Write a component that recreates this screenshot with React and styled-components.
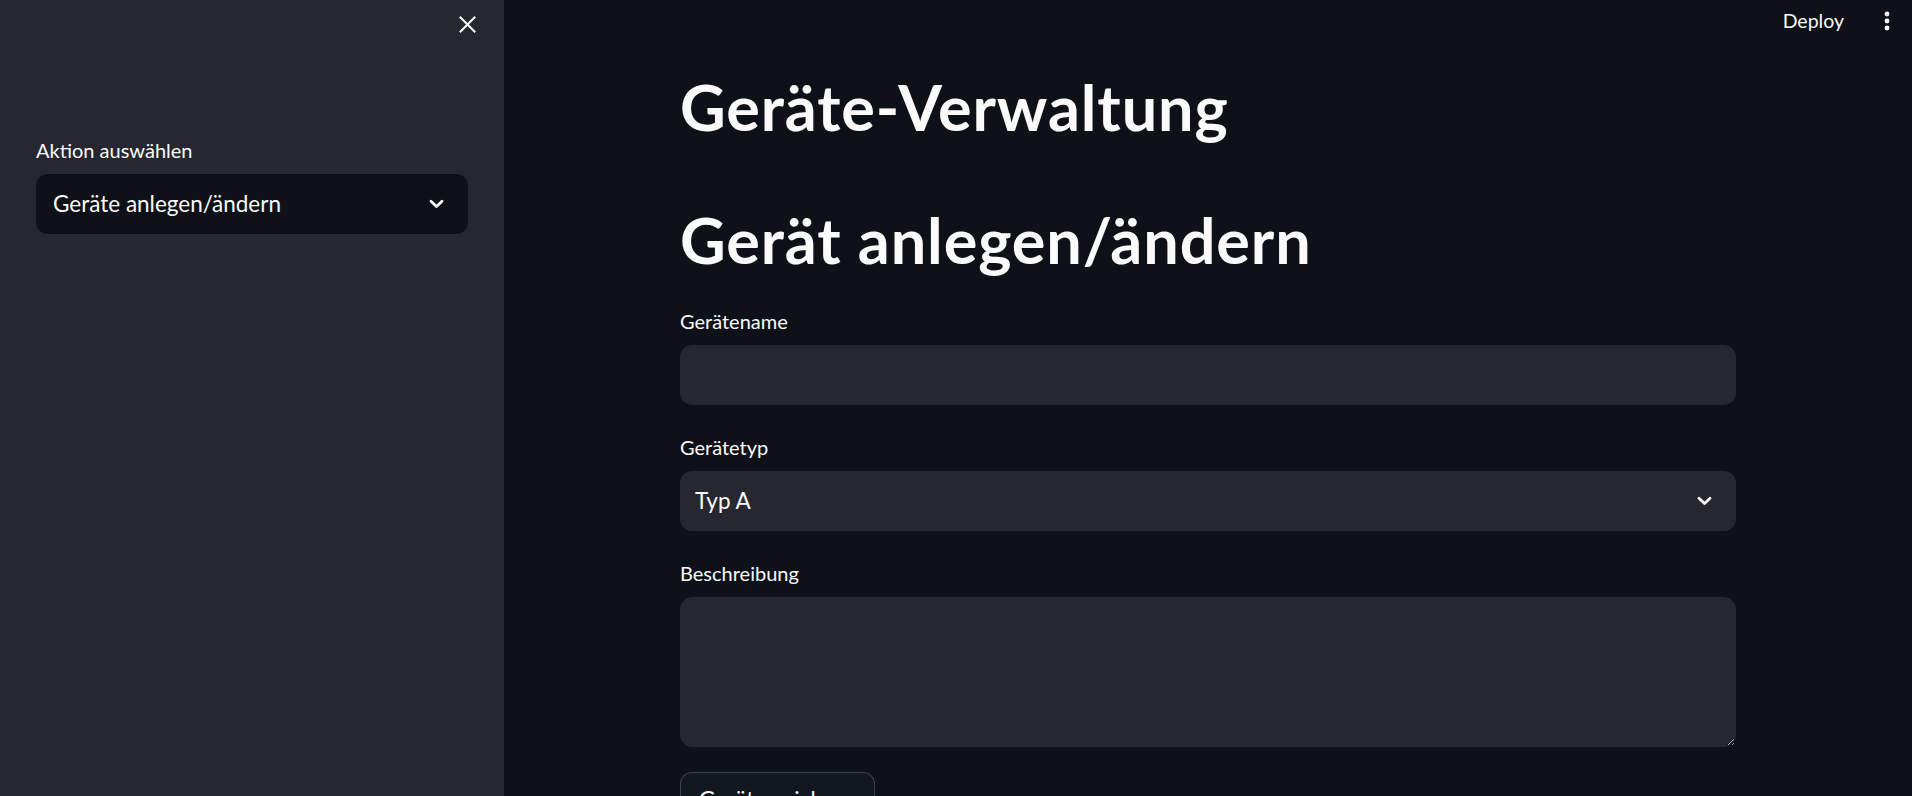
import React from "react";
import styled, { createGlobalStyle } from "styled-components";

const GlobalStyle = createGlobalStyle`
  html, body {
    margin: 0;
    padding: 0;
    background: #0e1117;
    color: #fafafa;
    font-family: "Lato", "Noto Sans", sans-serif;
    overflow: hidden;
  }
  * { box-sizing: border-box; }
`;

const Shell = styled.div`
  display: flex;
  width: 100%;
  height: 100vh;
  overflow: hidden;
`;

const Sidebar = styled.aside`
  flex: 0 0 504px;
  width: 504px;
  background: #262730;
  display: flex;
  flex-direction: column;
`;

const SidebarHeader = styled.div`
  flex-shrink: 0;
  height: 48px;
  display: flex;
  align-items: center;
  justify-content: flex-end;
  padding: 0 28px 0 36px;
`;

const IconButton = styled.button`
  background: none;
  border: none;
  padding: 0;
  margin: 0;
  display: flex;
  align-items: center;
  justify-content: center;
  color: #fafafa;
  cursor: pointer;
`;

const SidebarBody = styled.div`
  flex-shrink: 0;
  padding: 88px 36px 0 36px;
`;

const Main = styled.main`
  flex: 1;
  display: flex;
  flex-direction: column;
  min-width: 0;
  overflow: hidden;
`;

const TopBar = styled.header`
  flex-shrink: 0;
  height: 42px;
  display: flex;
  align-items: center;
  justify-content: flex-end;
  padding-right: 22px;
  gap: 40px;
`;

const DeployLink = styled.span`
  font-size: 19.5px;
  line-height: 28px;
  color: #fafafa;
`;

const Content = styled.div`
  flex-shrink: 0;
  width: 100%;
  max-width: 1104px;
  margin: 0 auto;
  padding: 29px 24px 0 24px;
  display: flex;
  flex-direction: column;
`;

const Title = styled.h1`
  margin: 0 0 ${(p) => p.$gap || 0}px 0;
  font-size: 63px;
  line-height: 72px;
  font-weight: 700;
  letter-spacing: 0.9px;
  color: #fafafa;
`;

const Field = styled.div`
  display: flex;
  flex-direction: column;
  flex-shrink: 0;
  margin-bottom: ${(p) => (p.$gap == null ? 28 : p.$gap)}px;
`;

const Label = styled.label`
  font-size: 20px;
  line-height: 28px;
  margin-bottom: 10px;
  color: #fafafa;
`;

const TextInput = styled.input`
  height: 60px;
  width: 100%;
  background: #262730;
  border: 1px solid #262730;
  border-radius: 12px;
  outline: none;
  color: #fafafa;
  font-family: inherit;
  font-size: 22.5px;
  padding: 0 16px;
`;

const SelectBox = styled.div`
  height: 60px;
  width: 100%;
  background: ${(p) => p.$bg};
  border-radius: 12px;
  display: flex;
  align-items: center;
  justify-content: space-between;
  padding: 0 24px 0 ${(p) => p.$padLeft}px;
  cursor: pointer;
`;

const SelectValue = styled.span`
  font-size: 22.5px;
  line-height: 60px;
  color: #fafafa;
  white-space: nowrap;
`;

const TextArea = styled.textarea`
  height: 150px;
  width: 100%;
  background: #262730;
  border: 1px solid #262730;
  border-radius: 12px;
  outline: none;
  color: #fafafa;
  font-family: inherit;
  font-size: 22.5px;
  padding: 16px;
  resize: vertical;
  color-scheme: dark;
  display: block;
`;

const Button = styled.button`
  align-self: flex-start;
  flex-shrink: 0;
  min-height: 60px;
  padding: 9px 18px 6px 18px;
  background: #131720;
  border: 1px solid rgba(250, 250, 250, 0.2);
  border-radius: 12px;
  color: #fafafa;
  font-family: inherit;
  font-size: 22.5px;
  line-height: 35px;
  display: flex;
  align-items: flex-start;
  cursor: pointer;
`;

const Chevron = () => (
  <svg width="15" height="10" viewBox="0 0 15 10" fill="none">
    <path d="M2 2.2 L7.5 7.5 L13 2.2" stroke="#fafafa" strokeWidth="2.8" strokeLinecap="round" strokeLinejoin="round" />
  </svg>
);

const CloseIcon = () => (
  <svg width="17" height="17" viewBox="0 0 17 17" fill="none">
    <path d="M1.5 1.5 L15.5 15.5 M15.5 1.5 L1.5 15.5" stroke="#fafafa" strokeWidth="2" strokeLinecap="square" />
  </svg>
);

const MoreIcon = () => (
  <svg width="6" height="20" viewBox="0 0 6 20" fill="#fafafa">
    <circle cx="3" cy="3" r="2.4" />
    <circle cx="3" cy="10" r="2.4" />
    <circle cx="3" cy="17" r="2.4" />
  </svg>
);

export default function App() {
  return (
    <>
      <GlobalStyle />
      <Shell>
        <Sidebar>
          <SidebarHeader>
            <IconButton aria-label="Close sidebar">
              <CloseIcon />
            </IconButton>
          </SidebarHeader>
          <SidebarBody>
            <Field $gap={0}>
              <Label>Aktion auswählen</Label>
              <SelectBox $bg="#0e1117" $padLeft={17}>
                <SelectValue>Geräte anlegen/ändern</SelectValue>
                <Chevron />
              </SelectBox>
            </Field>
          </SidebarBody>
        </Sidebar>
        <Main>
          <TopBar>
            <DeployLink>Deploy</DeployLink>
            <IconButton aria-label="Menu">
              <MoreIcon />
            </IconButton>
          </TopBar>
          <Content>
            <Title $gap={61}>Geräte-Verwaltung</Title>
            <Title $gap={31}>Gerät anlegen/ändern</Title>
            <Field>
              <Label>Gerätename</Label>
              <TextInput type="text" />
            </Field>
            <Field>
              <Label>Gerätetyp</Label>
              <SelectBox $bg="#262730" $padLeft={15}>
                <SelectValue>Typ A</SelectValue>
                <Chevron />
              </SelectBox>
            </Field>
            <Field $gap={25}>
              <Label>Beschreibung</Label>
              <TextArea />
            </Field>
            <Button>Gerät speichern</Button>
          </Content>
        </Main>
      </Shell>
    </>
  );
}
